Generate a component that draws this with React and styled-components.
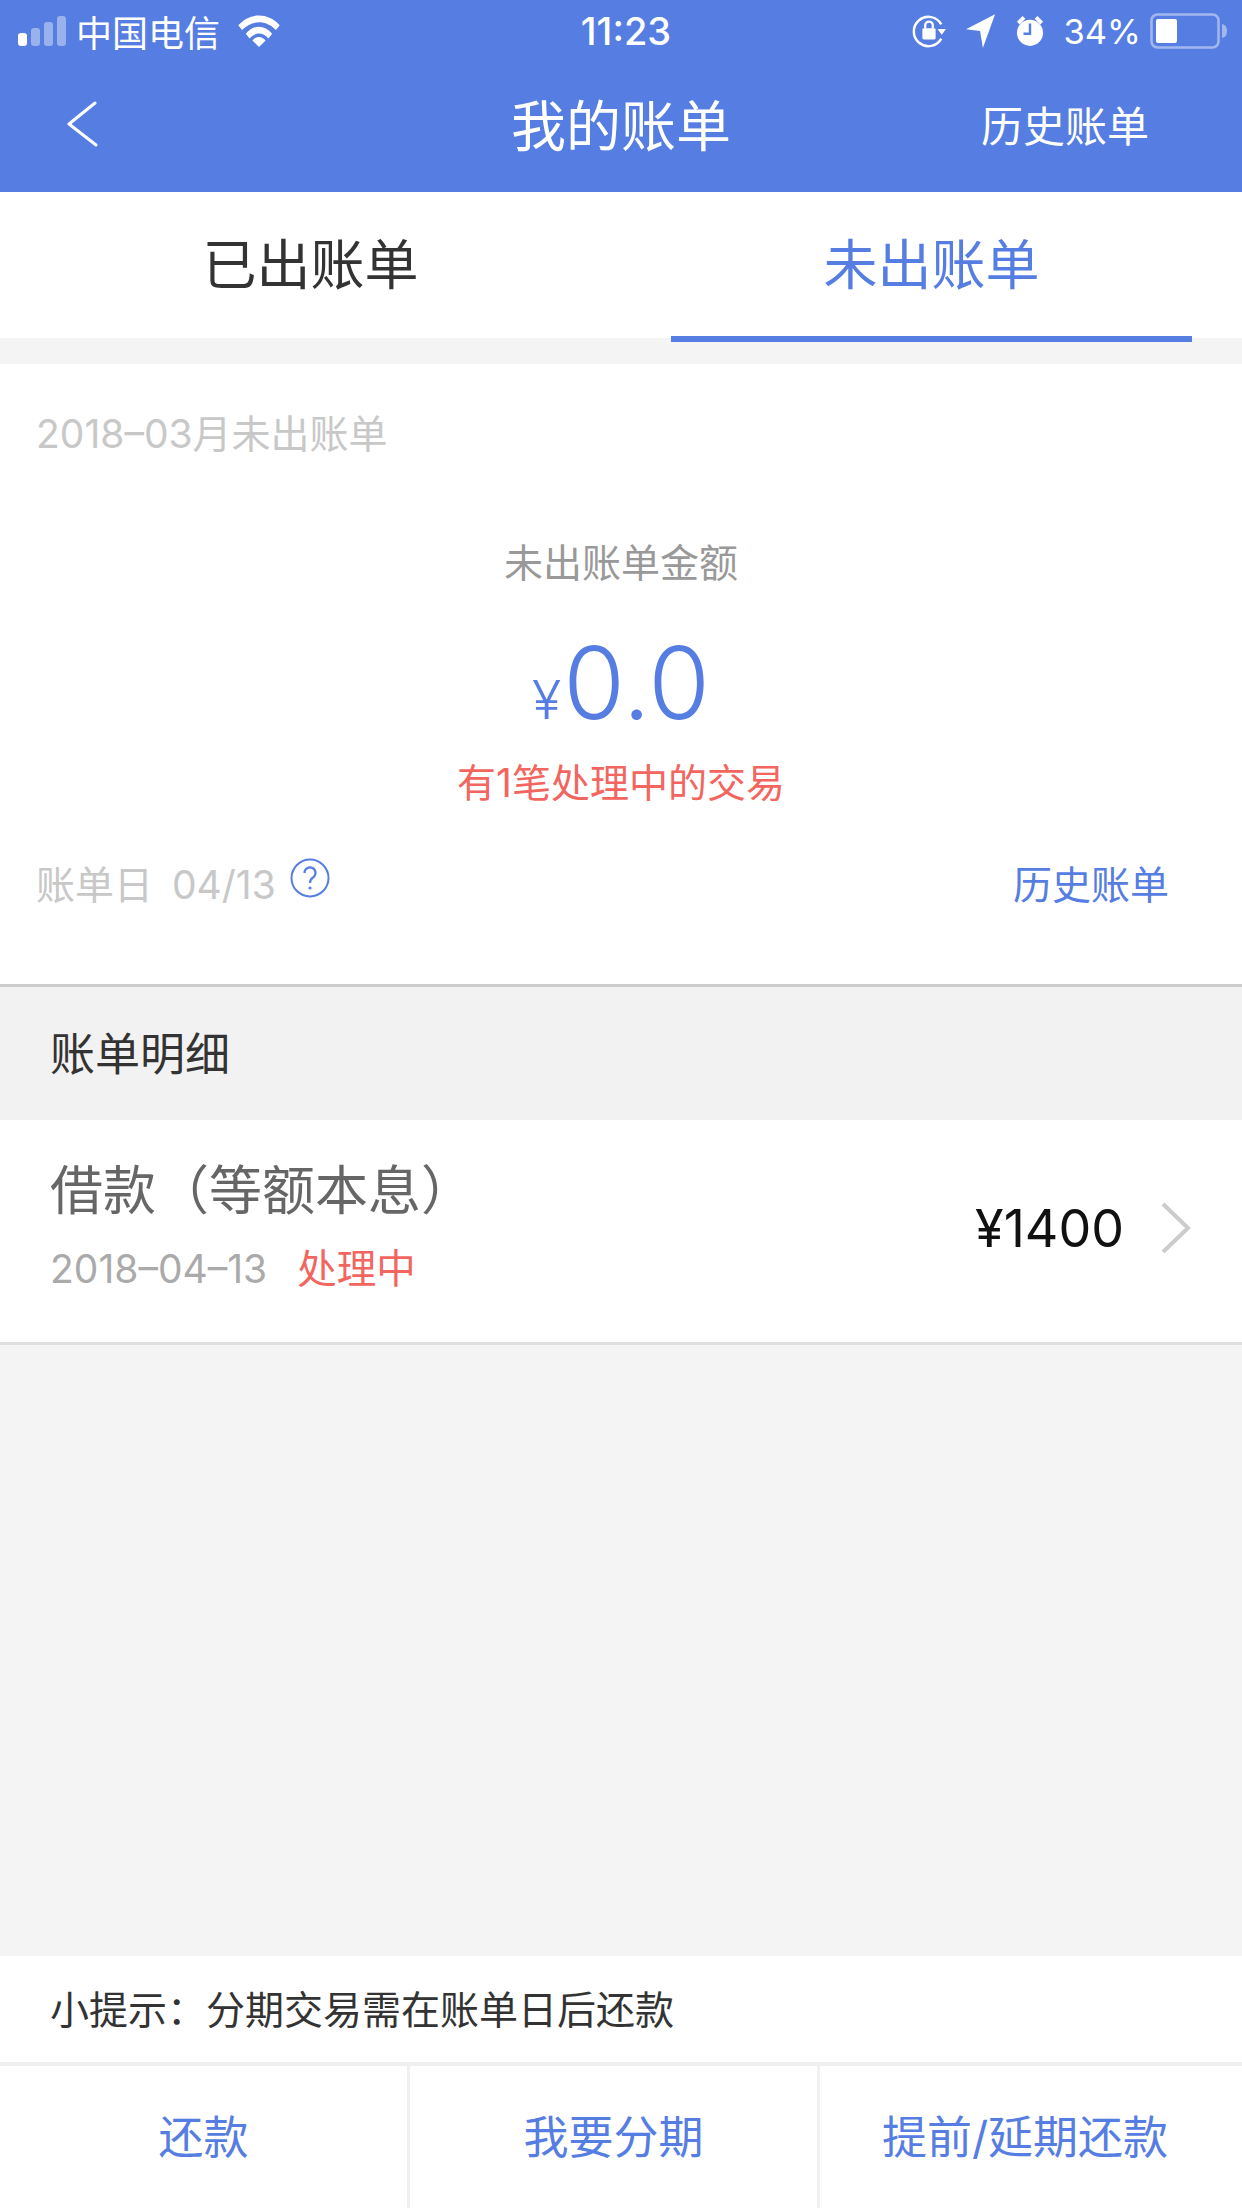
import React from "react";
import styled, { createGlobalStyle } from "styled-components";

const BLUE = "#567de1";
const FONT = `Inter, "Noto Sans CJK SC", sans-serif`;

const GlobalStyle = createGlobalStyle`
  html, body {
    margin: 0;
    padding: 0;
    background: #f4f4f4;
  }
  * {
    box-sizing: border-box;
  }
`;

const Page = styled.div`
  display: flex;
  flex-direction: column;
  width: 1242px;
  height: 2208px;
  overflow: hidden;
  background: #f4f4f4;
  font-family: ${FONT};
`;

const Header = styled.header`
  height: 192px;
  background: ${BLUE};
  color: #fff;
`;

const StatusBar = styled.div`
  display: grid;
  grid-template-columns: 1fr auto 1fr;
  align-items: center;
  height: 62px;
  padding: 0 14px 0 18px;
  font-size: 36px;
`;

const StatusLeft = styled.div`
  display: flex;
  align-items: center;
  gap: 10px;
`;

const StatusRight = styled.div`
  display: flex;
  align-items: center;
  justify-content: flex-end;
  gap: 20px;
`;

const BatteryLevel = styled.span`
  font-size: 34.5px;
  margin-right: -11px;
`;

const Time = styled.div`
  font-weight: 500;
  font-size: 38px;
  margin-left: 6px;
`;

const NavBar = styled.div`
  display: grid;
  grid-template-columns: 1fr auto 1fr;
  align-items: center;
  height: 120px;
  padding: 0 66px;
`;

const BackButton = styled.div`
  display: flex;
  margin-top: 4px;
`;

const NavTitle = styled.h1`
  margin: 0;
  font-size: 55px;
  font-weight: 400;
`;

const NavLink = styled.div`
  justify-self: end;
  font-size: 42px;
  margin: 2px 27px 0 0;
`;

const Tabs = styled.div`
  display: grid;
  grid-template-columns: 1fr 1fr;
  height: 146px;
  background: #fff;
`;

const Tab = styled.div`
  position: relative;
  display: flex;
  align-items: center;
  justify-content: center;
  padding-bottom: 8px;
  font-size: 54px;
  color: ${(p) => (p.$active ? BLUE : "#333")};

  ${(p) =>
    p.$active &&
    `
    &::after {
      content: "";
      position: absolute;
      left: 50px;
      right: 50px;
      bottom: -4px;
      height: 6px;
      background: ${BLUE};
    }
  `}
`;

const Card = styled.section`
  margin-top: 26px;
  padding: 45px 73px 72px 36px;
  background: #fff;
  border-bottom: 3px solid #ccc;
`;

const Month = styled.div`
  font-size: 39px;
  line-height: 50px;
  color: #c8c8c8;
`;

const AmountLabel = styled.div`
  margin-top: 79px;
  font-size: 39px;
  line-height: 50px;
  color: #999;
  text-align: center;
  padding-left: 37px;
`;

const Amount = styled.div`
  margin-top: 35px;
  height: 120px;
  display: flex;
  align-items: baseline;
  justify-content: center;
  line-height: 120px;
  color: ${BLUE};
  padding-left: 37px;
`;

const Currency = styled.span`
  font-size: 54px;
  font-weight: 350;
  margin-right: 2px;
`;

const AmountValue = styled.span`
  font-size: 100px;
  font-weight: 350;
`;

const Pending = styled.div`
  margin-top: 15px;
  font-size: 39px;
  line-height: 50px;
  color: #f2665f;
  text-align: center;
  padding-left: 37px;
`;

const BillRow = styled.div`
  display: flex;
  align-items: center;
  justify-content: space-between;
  margin-top: 50px;
  line-height: 50px;
`;

const BillDay = styled.div`
  display: flex;
  align-items: center;
  font-size: 39px;
  color: #c8c8c8;
`;

const BillDate = styled.span`
  margin-left: 19px;
`;

const HelpIcon = styled.svg`
  width: 40px;
  height: 40px;
  margin: 0 0 14px 14px;
`;

const HistoryLink = styled.div`
  font-size: 39px;
  color: ${BLUE};
`;

const SectionTitle = styled.div`
  display: flex;
  align-items: center;
  height: 133px;
  padding: 0 0 4px 50px;
  background: #f2f2f2;
  font-size: 45px;
  color: #333;
`;

const DetailRow = styled.div`
  display: flex;
  align-items: center;
  justify-content: space-between;
  height: 225px;
  padding: 0 51px 11px 50px;
  background: #fff;
  border-bottom: 3px solid #e0e0e0;
`;

const DetailInfo = styled.div`
  display: flex;
  flex-direction: column;
  gap: 22px;
  margin-top: 2px;
`;

const DetailTitle = styled.div`
  font-size: 53px;
  line-height: 62px;
  color: #666;
`;

const DetailMeta = styled.div`
  display: flex;
  align-items: center;
  gap: 30px;
  font-size: 39px;
  line-height: 50px;
  color: #aaa;
`;

const Processing = styled.span`
  color: #f2665f;
  font-size: 39.5px;
`;

const DetailRight = styled.div`
  display: flex;
  align-items: center;
  gap: 37px;
  margin-top: 5px;
`;

const DetailAmount = styled.div`
  font-size: 52px;
  color: #111;
`;

const Spacer = styled.div`
  flex: 1;
`;

const Tip = styled.div`
  display: flex;
  align-items: center;
  height: 106px;
  padding: 0 0 4px 50px;
  background: #fff;
  font-size: 39px;
  color: #333;
`;

const ActionBar = styled.div`
  display: grid;
  grid-template-columns: 407px 410px 1fr;
  height: 146px;
  background: #fff;
  border-top: 4px solid #f0f0f0;
`;

const ActionButton = styled.div`
  display: flex;
  align-items: center;
  justify-content: center;
  font-size: 45px;
  color: ${BLUE};
  padding: 0 ${(p) => p.$endGap || 0}px 6px 0;
  border-left: ${(p) => (p.$divider ? "3px solid #f0f0f0" : "none")};
`;

function SignalIcon() {
  return (
    <svg width="48" height="30" viewBox="0 0 48 30">
      <rect x="0" y="17" width="9" height="13" rx="3" fill="#fff" />
      <rect x="13" y="12" width="9" height="18" rx="3" fill="#fff" opacity="0.4" />
      <rect x="26" y="6" width="9" height="24" rx="3" fill="#fff" opacity="0.4" />
      <rect x="39" y="0" width="9" height="30" rx="3" fill="#fff" opacity="0.4" />
    </svg>
  );
}

function WifiIcon() {
  return (
    <svg width="42" height="32" viewBox="0 0 44 34" style={{ marginLeft: 8 }}>
      <path d="M0 11 C12 -3 32 -3 44 11 L40 16 C29 5 15 5 4 16 Z" fill="#fff" />
      <path d="M8 20 C16 10 28 10 36 20 L32 25 C26 18 18 18 12 25 Z" fill="#fff" />
      <path d="M15 27 C19 22 25 22 29 27 L22 34 Z" fill="#fff" />
    </svg>
  );
}

function LockRotateIcon() {
  return (
    <svg width="34" height="36" viewBox="0 0 36 36">
      <path
        d="M31 11 A15.5 15.5 0 1 0 31 26"
        fill="none"
        stroke="#fff"
        strokeWidth="2.6"
      />
      <path d="M27 16 L36 16 L31.5 22 Z" fill="#fff" />
      <rect x="11" y="15" width="14" height="12" rx="1.5" fill="#fff" />
      <path
        d="M14 15 V12 A4 4 0 0 1 22 12 V15"
        fill="none"
        stroke="#fff"
        strokeWidth="2.4"
      />
    </svg>
  );
}

function LocationIcon() {
  return (
    <svg width="30" height="34" viewBox="0 0 32 36">
      <path d="M31 0 L18 36 L15 18 L0 16 Z" fill="#fff" />
    </svg>
  );
}

function AlarmIcon() {
  return (
    <svg width="28" height="32" viewBox="0 0 30 34">
      <circle cx="15" cy="19" r="14" fill="#fff" />
      <path d="M1 7 L7 1 L10 4 L4 10 Z" fill="#fff" />
      <path d="M29 7 L23 1 L20 4 L26 10 Z" fill="#fff" />
      <path d="M15 9 V20 H8" fill="none" stroke={BLUE} strokeWidth="2.6" />
    </svg>
  );
}

function BatteryIcon() {
  return (
    <svg width="78" height="36" viewBox="0 0 78 36">
      <rect
        x="1.5"
        y="1.5"
        width="67"
        height="33"
        rx="6"
        fill="none"
        stroke="#fff"
        strokeOpacity="0.45"
        strokeWidth="2.5"
      />
      <rect x="6" y="6" width="21" height="24" rx="2" fill="#fff" />
      <path d="M72 11 C76 12 77 15 77 18 C77 21 76 24 72 25 Z" fill="#fff" opacity="0.45" />
    </svg>
  );
}

function BackIcon() {
  return (
    <svg width="32" height="46" viewBox="0 0 32 46">
      <path
        d="M29 2 L3 23 L30 44"
        fill="none"
        stroke="#fff"
        strokeWidth="3"
        strokeLinecap="round"
        strokeLinejoin="round"
      />
    </svg>
  );
}

function ChevronIcon() {
  return (
    <svg width="30" height="52" viewBox="0 0 30 52">
      <path d="M2 2 L27 26 L2 50" fill="none" stroke="#ccc" strokeWidth="4" />
    </svg>
  );
}

function App() {
  return (
    <Page>
      <GlobalStyle />
      <Header>
        <StatusBar>
          <StatusLeft>
            <SignalIcon />
            <span>中国电信</span>
            <WifiIcon />
          </StatusLeft>
          <Time>11:23</Time>
          <StatusRight>
            <LockRotateIcon />
            <LocationIcon />
            <AlarmIcon />
            <BatteryLevel>34%</BatteryLevel>
            <BatteryIcon />
          </StatusRight>
        </StatusBar>
        <NavBar>
          <BackButton>
            <BackIcon />
          </BackButton>
          <NavTitle>我的账单</NavTitle>
          <NavLink>历史账单</NavLink>
        </NavBar>
      </Header>

      <Tabs>
        <Tab>已出账单</Tab>
        <Tab $active>未出账单</Tab>
      </Tabs>

      <Card>
        <Month>2018–03月未出账单</Month>
        <AmountLabel>未出账单金额</AmountLabel>
        <Amount>
          <Currency>¥</Currency>
          <AmountValue>0.0</AmountValue>
        </Amount>
        <Pending>有1笔处理中的交易</Pending>
        <BillRow>
          <BillDay>
            账单日
            <BillDate>04/13</BillDate>
            <HelpIcon viewBox="0 0 40 40">
              <circle cx="20" cy="20" r="18.5" fill="none" stroke={BLUE} strokeWidth="2" />
              <path
                d="M14.5 15 A5.5 5.5 0 1 1 23 19.5 C20.5 21 20 22 20 25"
                fill="none"
                stroke={BLUE}
                strokeWidth="2.2"
              />
              <circle cx="20" cy="30" r="1.6" fill={BLUE} />
            </HelpIcon>
          </BillDay>
          <HistoryLink>历史账单</HistoryLink>
        </BillRow>
      </Card>

      <SectionTitle>账单明细</SectionTitle>
      <DetailRow>
        <DetailInfo>
          <DetailTitle>借款（等额本息）</DetailTitle>
          <DetailMeta>
            <span>2018–04–13</span>
            <Processing>处理中</Processing>
          </DetailMeta>
        </DetailInfo>
        <DetailRight>
          <DetailAmount>¥1400</DetailAmount>
          <ChevronIcon />
        </DetailRight>
      </DetailRow>

      <Spacer />

      <Tip>小提示：分期交易需在账单日后还款</Tip>
      <ActionBar>
        <ActionButton>还款</ActionButton>
        <ActionButton $divider>我要分期</ActionButton>
        <ActionButton $divider $endGap={12}>
          提前/延期还款
        </ActionButton>
      </ActionBar>
    </Page>
  );
}

export default App;
